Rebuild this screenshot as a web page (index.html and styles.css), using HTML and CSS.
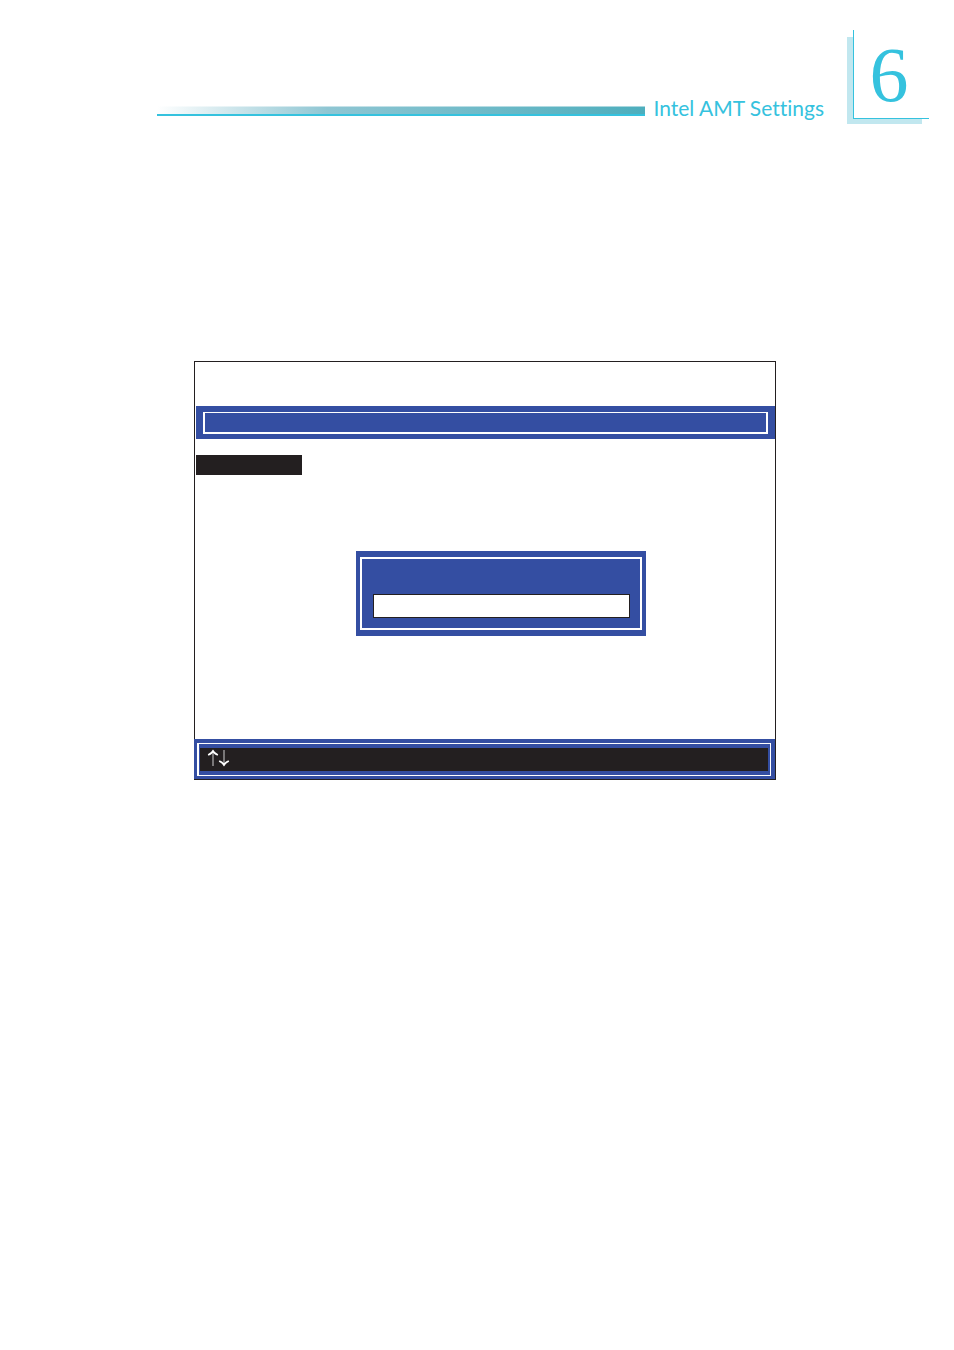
FILE: index.html
```
<!DOCTYPE html>
<html lang="en">
<head>
    <meta charset="UTF-8">
    <title>Intel AMT Settings</title>
    <link rel="stylesheet" href="styles.css">
</head>

<body>

<header class="header">
    <div class="rule"></div>
    <h1 class="title">Intel AMT Settings</h1>
    <div class="chapter">6</div>
</header>

<main class="content">
    <div class="screen">
        <div class="screen-title">
            <div class="screen-title-inner"></div>
        </div>
        <div class="menu-item"></div>
        <form class="dialog">
            <div class="dialog-inner">
                <input class="dialog-input" type="text" aria-label="Password">
            </div>
        </form>
        <div class="keys">
            <div class="keys-inner">
                <div class="keys-text">
                    <svg class="arrows" viewBox="0 0 22 18" role="img" aria-label="Up and down arrow keys">
                        <path class="shaft" d="M5 2V17M16 1V16"/>
                        <path class="head" d="M5 .5Q7 4 10.200 5.300L9.500 6.800Q6.700 5.700 5 3.800Q3.300 5.700 .5 6.800L-.2 5.300Q3 4 5 .5Z"/>
                        <path class="head" d="M16 17.500Q18 14 21.200 12.700L20.500 11.200Q17.700 12.300 16 14.200Q14.300 12.300 11.500 11.200L10.800 12.700Q14 14 16 17.500Z"/>
                    </svg>
                </div>
            </div>
        </div>
    </div>
</main>

</body>
</html>
```

FILE: styles.css
```
*{
    margin: 0;
    padding: 0;
    box-sizing: border-box;
}
body{
    background: #fff;
}

/* page header */
.header{
    display: flex;
    align-items: flex-start;
    padding: 30px 25px 0 157px;
    color: #35c2de;
}
.rule{
    flex: 1;
    height: 10px;
    margin-top: 76px;
    border-bottom: 2px solid #35c2de;
    background:
        linear-gradient(rgba(255,255,255,.5), rgba(255,255,255,.5)) top / 100% 1px no-repeat,
        linear-gradient(to right, #fff, #8fc6d3 35%, #4daebd);
}
.title{
    margin: 65px 29px 0 8px;
    font: 21px/26px Lato, sans-serif;
    font-variant-ligatures: none;
    white-space: nowrap;
}
.chapter{
    position: relative;
    width: 76px;
    height: 89px;
    padding-right: 5px;
    border-left: 1px solid #35c2de;
    border-bottom: 1px solid #35c2de;
    background: #fff;
    font: 78px/90px "Liberation Serif", serif;
    text-align: center;
}
/* pale shade behind the chapter box */
.chapter::before{
    content: "";
    position: absolute;
    z-index: -1;
    top: 7px;
    right: 7px;
    bottom: -6px;
    left: -7px;
    background: #c1e7ef;
}

/* setup screen */
.content{
    padding: 240px 178px 0 194px;
}
.screen{
    display: flex;
    flex-direction: column;
    border: 1px solid #231f20;
    padding-top: 44px;
}
.screen-title{
    margin-left: 1px;
    padding: 6px 7px 5px;
    background: #344ea2;
}
.screen-title-inner{
    height: 22px;
    border: 2px solid #fff;
    border-top-width: 1px;
}
.menu-item{
    width: 106px;
    height: 20px;
    margin: 16px 0 0 1px;
    background: #231f20;
}
.dialog{
    align-self: center;
    width: 50%;
    margin: 76px 0 103px 32px;
    padding: 6px 4px;
    background: #344ea2;
}
.dialog-inner{
    padding: 35px 10px 10px 11px;
    border: 2px solid #fff;
}
.dialog-input{
    display: block;
    width: 100%;
    height: 24px;
    padding: 0 4px;
    border: 1px solid #231f20;
    background: #fff;
    font: 16px "Liberation Sans", sans-serif;
}
.keys{
    margin-left: -1px;
    padding: 4px 4px 3px 3px;
    background: #344ea2;
}
.keys-inner{
    padding: 4px 2px;
    border: 1px solid #fff;
    border-left-width: 2px;
    padding-left: 1px;
}
.keys-text{
    height: 23px;
    padding: 1px 8px;
    background: #231f20;
}
.arrows{
    display: block;
    width: 22px;
    height: 18px;
    overflow: visible;
}
.shaft{
    fill: none;
    stroke: #d0d0d0;
}
.head{
    fill: #fff;
}
```
